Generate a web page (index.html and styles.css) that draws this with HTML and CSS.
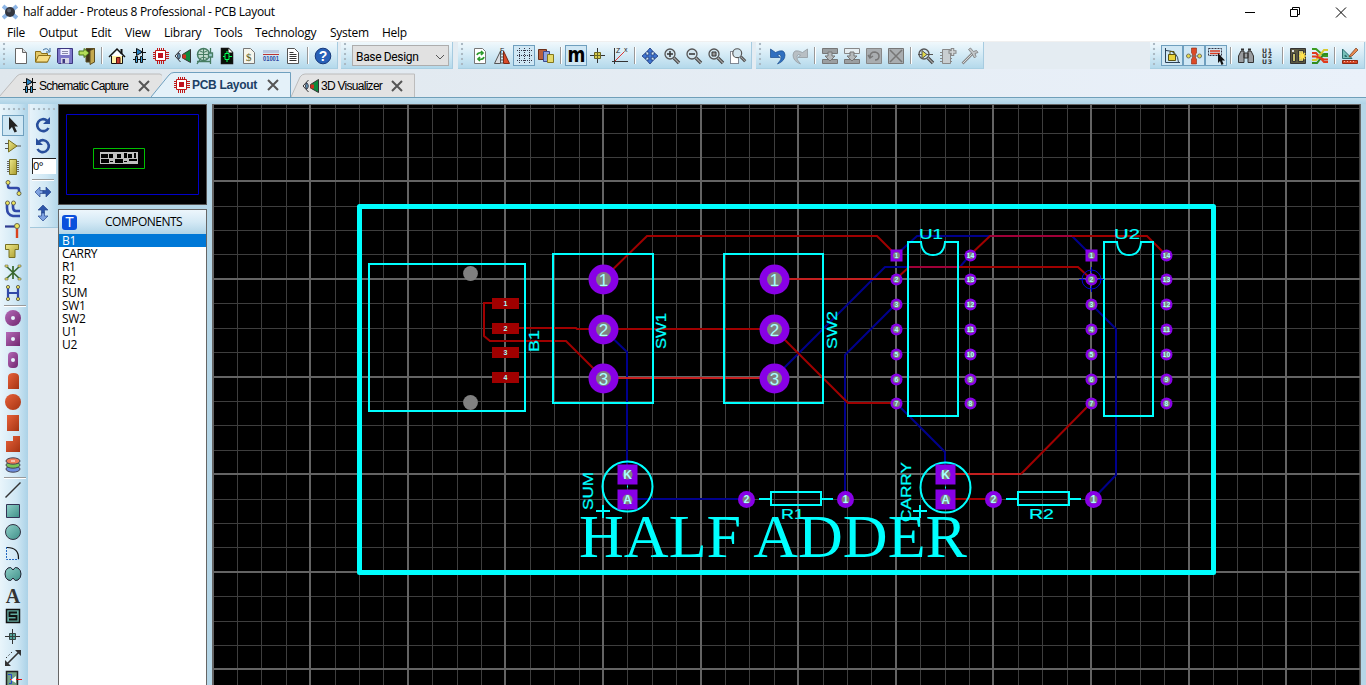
FILE: index.html
```html
<!DOCTYPE html>
<html lang="en">
<head>
<meta charset="utf-8">
<title>half adder - Proteus 8 Professional - PCB Layout</title>
<link rel="stylesheet" href="styles.css">
</head>
<body>
<svg class="defs" width="0" height="0">
  <defs>
    <linearGradient id="gold" x2="1" y2="1"><stop stop-color="#efe98a"/><stop offset="1" stop-color="#a89b2c"/></linearGradient>
    <linearGradient id="plum" x2="1" y2="1"><stop stop-color="#b56bb8"/><stop offset="1" stop-color="#71266f"/></linearGradient>
    <linearGradient id="rust" x2="1" y2="1"><stop stop-color="#e8623a"/><stop offset="1" stop-color="#a53413"/></linearGradient>
    <linearGradient id="teal" x2="1" y2="1"><stop stop-color="#8fd0c8"/><stop offset="1" stop-color="#3f8f88"/></linearGradient>
    <symbol id="chip" viewBox="0 0 18 18"><path d="M5.500 1v16M7.500 1v16M9.500 1v16M11.500 1v16M1 5.500h16M1 7.500h16M1 9.500h16M1 11.500h16" stroke="#c01818"/><path d="M3.500 3.500h10v10h-10z" fill="#fff" stroke="#c01818"/><path d="M6 6h5v5H6z" fill="#c01020"/></symbol>
    <symbol id="schem" viewBox="0 0 18 18"><path d="M3 5.500h13M3 12.500h13" stroke="#111"/><path d="M6.500 1.500v7l6-3.500z" fill="#2a86c8" stroke="#111"/><path d="M12.500 1v8" stroke="#111"/><path d="M5.500 9.500h2v6h-2zM10.500 9.500h2v6h-2z" fill="#3aa0dc" stroke="#111"/></symbol>
    <symbol id="viz" viewBox="0 0 18 18"><path d="M6.500 3 1 9l5.500 6" fill="none" stroke="#333"/><path d="M4.500 5.500Q8 9 4.500 12.500 2.500 9 4.500 5.500z" fill="#6aa4c4" stroke="#334"/><path d="M16.500 2.500v13L8.500 11V7.500z" fill="#0d8a3c" stroke="#333"/><path d="M8.500 7.500H12v4H8.500z" fill="#d03020"/></symbol>
    <symbol id="mag" viewBox="0 0 18 18"><path d="m11 11 5 5" stroke="#444" stroke-width="3.400"/><path d="m11 11 5 5" stroke="#a5a5a5" stroke-width="1.200"/><circle cx="7" cy="7" r="5" fill="#d3e5ee" stroke="#555" stroke-width="1.300"/></symbol>
    <symbol id="x" viewBox="0 0 12 12"><path d="m1 1 10 10M11 1 1 11" stroke="#555" stroke-width="2"/></symbol>
  </defs>
</svg>

<header class="titlebar">
  <svg class="app-icon" viewBox="0 0 16 16"><path d="m1 2 14 12M15 2 1 14" stroke="#8eb6e6" stroke-width="4"/><circle cx="8" cy="8" r="5" fill="#33363f"/><circle cx="7" cy="6.500" r="2" fill="#5f6572"/></svg>
  <span class="title">half adder - Proteus 8 Professional - PCB Layout</span>
  <svg class="controls" viewBox="0 0 102 20"><path d="M0 10.500h10M45.500 7.500h7v7h-7zM47.500 7V5.500h7v7H53M91 5.500l10 10M101 5.500l-10 10" fill="none" stroke="#000"/></svg>
</header>

<nav class="menubar"><span>File</span><span>Output</span><span>Edit</span><span>View</span><span>Library</span><span>Tools</span><span>Technology</span><span>System</span><span>Help</span></nav>

<div class="toolbars">
  <div class="bar bar-file">
    <i class="grip"></i>
    <b class="btn"><svg viewBox="0 0 18 18"><path d="M3.500 1.500h7l4 4v11h-11z" fill="#fff" stroke="#666"/><path d="M10.500 1.500v4h4" fill="#ddd" stroke="#666"/></svg></b>
    <b class="btn"><svg viewBox="0 0 18 18"><path d="M1.500 15V4.500h5l1 2h6V15z" fill="#e3c866" stroke="#8a6d17"/><path d="m1.500 15 3-6.500h12L13.500 15z" fill="#f7dd83" stroke="#8a6d17"/><path d="M9 3q4-3 6 1m1-3v4h-4" fill="none" stroke="#3d6d9c"/></svg></b>
    <b class="btn"><svg viewBox="0 0 18 18"><path d="M1.500 1.500h15v15h-14l-1-1z" fill="#7c76c8" stroke="#3b3680"/><path d="M4.500 2h9v6h-9z" fill="#eef"/><path d="M6 4.500h6M6 6.500h6" stroke="#88a"/><path d="M5 11h8v5.500H5z" fill="#d5d5e6"/><path d="M6.500 12H9v4H6.500z" fill="#3b3680"/></svg></b>
    <b class="btn"><svg viewBox="0 0 18 18"><path d="M8 1.500h8.500V15H8z" fill="#3e3418" stroke="#5b4d22"/><path d="M12 3.500l4.500-2V15L12 17.500z" fill="#c3a84e" stroke="#5b4d22"/><path d="M1 4h5V1.500L11 6l-5 4.500V8H1z" fill="#b4dc58" stroke="#47751a"/></svg></b>
    <i class="sep"></i>
    <b class="btn"><svg viewBox="0 0 18 18"><path d="M3.500 9v7.500h11V9" fill="#fff2a8" stroke="#111"/><path d="M13.500 7V2" stroke="#111" stroke-width="2"/><path d="M4 9 9 4l5 5z" fill="#fff"/><path d="M1 10 9 2l8 8" fill="none" stroke="#111" stroke-width="1.500"/><path d="M8.500 10.500H12v6H8.500z" fill="#c9382b" stroke="#511"/></svg></b>
    <b class="btn"><svg><use href="#schem"/></svg></b>
    <b class="btn"><svg><use href="#chip"/></svg></b>
    <b class="btn"><svg><use href="#viz"/></svg></b>
    <b class="btn"><svg viewBox="0 0 18 18"><circle cx="7.500" cy="7.500" r="6" fill="#c3dccf" stroke="#467c62" stroke-width="1.500"/><path d="M2 7.500h11M7.500 2v11M4 4q3.500 3 7 0M4 11.500q3.500-3 7 0" stroke="#467c62" fill="none"/><path d="M14.500 1v5M12.500 6h4v4h-4zM14.500 10v7M4 12.500 1 17M1 14.500h13" stroke="#467c62" stroke-width="1.300" fill="#9cc"/></svg></b>
    <b class="btn"><svg viewBox="0 0 18 18"><path d="M3.500 1.500h7l4 4v11h-11z" fill="#061006" stroke="#111" stroke-width="1.500"/><path d="M10.500 1.500v4h4z" fill="#fff"/><path d="M5 9.500h2v-3h4v6H7v-3M11 9.500h3M9 4v2M9 13v2" fill="none" stroke="#0f5"/></svg></b>
    <b class="btn"><svg viewBox="0 0 18 18"><path d="M3.500 1.500h7l4 4v11h-11z" fill="#f5f5ec" stroke="#777"/><text x="6" y="13.500" class="g-dollar">$</text></svg></b>
    <b class="btn"><svg viewBox="0 0 18 18"><path d="M1 3h16v3H1z" fill="#bac8e0"/><path d="M1 7.500h16" stroke="#b33"/><text x="1" y="14" class="g-bits" textLength="16" lengthAdjust="spacingAndGlyphs">01001</text></svg></b>
    <b class="btn"><svg viewBox="0 0 18 18"><path d="M3.500 1.500h7l4 4v11h-11z" fill="#fff" stroke="#555"/><path d="M5.500 5.500h4M5.500 7.500h7M5.500 9.500h7M5.500 11.500h7M5.500 13.500h7" stroke="#333"/></svg></b>
    <i class="sep"></i>
    <b class="btn"><svg viewBox="0 0 18 18"><circle cx="9" cy="9" r="7.800" fill="#2860b8" stroke="#16397c"/><text x="4.700" y="14" class="g-help">?</text></svg></b>
  </div>

  <div class="bar bar-combo">
    <i class="grip"></i>
    <div class="combo"><span>Base Design</span><svg viewBox="0 0 10 6"><path d="m1 1 4 4 4-4" fill="none" stroke="#555"/></svg></div>
  </div>

  <div class="bar bar-view">
    <i class="grip"></i>
    <b class="btn"><svg viewBox="0 0 18 18"><path d="M3.500 1.500h8l3 3v12h-11z" fill="#fff" stroke="#777"/><path d="M6 8q1-3 5-2M10 4l2 2-2 2M13 10q-1 3-5 2M9 10l-2 2 2 2" fill="none" stroke="#2c9a2c" stroke-width="1.700"/></svg></b>
    <b class="btn"><svg viewBox="0 0 18 18"><path d="M7.500 4v12.500h-6z" fill="#d9dde2" stroke="#555"/><path d="M10.500 4v12.500h6z" fill="#d84a28" stroke="#7a2713"/><path d="M9 6v11" stroke="#555" stroke-dasharray="2 1"/><text x="7" y="6" class="g-tiny">F</text></svg></b>
    <b class="btn on"><svg viewBox="0 0 18 18"><path d="M2 3.500h15M2 8.500h15M2 13.500h15M4.500 1v15M9.500 1v15M14.500 1v15" stroke="#334" stroke-dasharray="1 1"/></svg></b>
    <b class="btn"><svg viewBox="0 0 18 18"><path d="M1.500 2.500h8v10h-8z" fill="#b9603e" stroke="#6a2e18"/><path d="M6.500 4.500h6v10h-6z" fill="#8fa3e0" stroke="#3b4b90"/><path d="M10.500 7.500h6v8h-6z" fill="#e6da6b" stroke="#82771d"/></svg></b>
    <i class="sep"></i>
    <b class="btn on"><span class="g-m">m</span></b>
    <b class="btn"><svg viewBox="0 0 18 18"><path d="M8.500 1v15M1 8.500h15" stroke="#333"/><path d="M5.500 5.500h6v6h-6z" fill="#d8ce4e" stroke="#6b6522"/><path d="M8.500 6v6M6 8.500h6" stroke="#6b6522"/></svg></b>
    <b class="btn"><svg viewBox="0 0 18 18"><path d="M3.500 1v16M1 14.500h16" stroke="#333"/><path d="m4 14 9-9" stroke="#d33"/><text x="5" y="6" class="g-tiny">Z</text><text x="13" y="5" class="g-tiny">x</text></svg></b>
    <i class="sep"></i>
    <b class="btn"><svg viewBox="0 0 18 18"><path d="m9 1 3.500 4h-2.300v3H13V5.500L17 9l-4 3.500V10.200h-2.800V13h2.300L9 17l-3.500-4h2.300v-2.800H5v2.300L1 9l4-3.500V8h2.800V5H5.500z" fill="#3f75d0" stroke="#1a3576" stroke-width=".8"/></svg></b>
    <b class="btn"><svg viewBox="0 0 18 18"><use href="#mag"/><path d="M4 7h6M7 4v6" stroke="#333" stroke-width="1.500"/></svg></b>
    <b class="btn"><svg viewBox="0 0 18 18"><use href="#mag"/><path d="M4 7h6" stroke="#333" stroke-width="1.500"/></svg></b>
    <b class="btn"><svg viewBox="0 0 18 18"><use href="#mag"/><path d="M5 5h4v4H5z" fill="#999" stroke="#333"/></svg></b>
    <b class="btn"><svg viewBox="0 0 18 18"><path d="M1.500 4.500h8v12h-8z" fill="#fff" stroke="#223" stroke-dasharray="1 1"/><g transform="translate(2 0)"><use href="#mag" width="16" height="16"/></g></svg></b>
  </div>

  <div class="bar bar-edit">
    <i class="grip"></i>
    <b class="btn"><svg viewBox="0 0 18 18"><path d="M6.500 5.500Q15.500 1 16 8q0 6-7.500 9Q13 12.500 12 9q-1-2.500-3.500-1L11 10.500H1.500V2z" fill="#2f6fc0" stroke="#174a8c" stroke-width=".7"/></svg></b>
    <b class="btn"><svg viewBox="0 0 18 18"><path d="M11.500 5.500Q2.500 1 2 8q0 6 7.500 9Q5 12.500 6 9q1-2.500 3.500-1L7 10.500h9.500V2z" fill="#b8bfc4" stroke="#8d9499" stroke-width=".7"/></svg></b>
    <i class="sep"></i>
    <b class="btn"><svg viewBox="0 0 18 18"><path d="M1.500 1.500h15v5h-15zM1.500 12.500h15v4h-15z" fill="#9b9fa1" stroke="#777"/><path d="M7 5h4v4h3l-5 5-5-5h3z" fill="#b5b9bb" stroke="#777"/></svg></b>
    <b class="btn"><svg viewBox="0 0 18 18"><path d="M1.500 1.500h15v5h-15z" fill="#e5edf1" stroke="#888"/><path d="M1.500 12.500h15v4h-15z" fill="#9b9fa1" stroke="#777"/><path d="M7 5h4v4h3l-5 5-5-5h3z" fill="#b5b9bb" stroke="#777"/></svg></b>
    <b class="btn"><svg viewBox="0 0 18 18"><path d="M1.500 1.500h15v15h-15z" fill="#a9adb0" stroke="#888"/><path d="M5 10q0-5 5-5 4 1 4 4 0 4-4 4M3 8l2 3 3-2" fill="none" stroke="#777" stroke-width="1.500"/></svg></b>
    <b class="btn"><svg viewBox="0 0 18 18"><path d="M1.500 1.500h15v15h-15z" fill="#a9adb0" stroke="#777"/><path d="m3 3 12 12M15 3 3 15" stroke="#777" stroke-width="1.500"/></svg></b>
    <i class="sep"></i>
    <b class="btn"><svg viewBox="0 0 18 18"><use href="#mag"/><path d="M1 7.500h15" stroke="#555"/><path d="M5 3.500v8l5-4z" fill="#e0d84a" stroke="#555"/></svg></b>
    <b class="btn"><svg viewBox="0 0 18 18"><path d="M1 5.500h12M1 8.500h12M1 11.500h12M1 14.500h12" stroke="#888"/><path d="M3.500 2.500h8v14h-8z" fill="#c9ced1" stroke="#888"/><path d="M13.500 1v8M9.500 5h8" stroke="#888" stroke-width="3.500"/><path d="M13.500 2v6M10.500 5h6" stroke="#d5d9db" stroke-width="1.500"/></svg></b>
    <b class="btn"><svg viewBox="0 0 18 18"><path d="m1.500 16.500 10-10" stroke="#888" stroke-width="2.600"/><path d="m2 16 9-9" stroke="#d5d9db"/><path d="m7.500 2.500 2-1.500 3 3.500 3-1 1.500 2-3 1 1 3-1.500 1.500-3-5z" fill="#c3c8cb" stroke="#777" stroke-width=".8"/></svg></b>
  </div>

  <div class="bar bar-tools">
    <i class="grip"></i>
    <b class="btn on"><svg viewBox="0 0 18 18"><path d="M2.500 1v14.500H17M3 3.500q12 0 12.500 12" fill="none" stroke="#2c4258"/><path d="M5.500 7.500h7v6h-7z" fill="#e8d33c" stroke="#5d5413"/><path d="M7 7V4.500h4V7" fill="none" stroke="#5d5413"/></svg></b>
    <b class="btn on"><svg viewBox="0 0 18 18"><path d="M6.500 1h5v5l-1 1v4l1 1v5h-5v-5l1-1V7l-1-1z" fill="#dc4a26" stroke="#8a2a10" stroke-width=".6"/><path d="M1 9h16" stroke="#777"/><circle cx="3.500" cy="9" r="2" fill="#e8dc4a" stroke="#776"/><circle cx="14.500" cy="9" r="2" fill="#e8dc4a" stroke="#776"/></svg></b>
    <b class="btn on"><svg viewBox="0 0 18 18"><path d="M1.500 1.500h13v7h-13z" fill="none" stroke="#334" stroke-dasharray="2 1"/><path d="M3 4h10M3 6.500h10" stroke="#d8391e" stroke-width="1.500"/><path d="M11 6v10l2-2 1.500 4 2-1-1.500-3.500H18z" fill="#111"/></svg></b>
    <i class="sep"></i>
    <b class="btn"><svg viewBox="0 0 18 18"><path d="M1.500 15.500V9L4 4h3v11.500zM16.500 15.500V9L14 4h-3v11.500zM7 6h4v5H7z" fill="#9a9da0" stroke="#333"/><path d="M4 2.500h3M11 2.500h3" stroke="#333" stroke-width="2"/></svg></b>
    <b class="btn"><svg viewBox="0 0 18 18"><text class="g-u" textLength="10" x="3" y="5.500">U1</text><text class="g-u" textLength="10" x="3" y="11.300">U2</text><text class="g-u" textLength="10" x="3" y="17">U3</text></svg></b>
    <i class="sep"></i>
    <b class="btn"><svg viewBox="0 0 18 18"><path d="M1.500 1.500h15v15h-15z" fill="#5b5942" stroke="#333"/><path d="M3.500 6.500h3v8h-3zM9.500 3.500h5v11h-5z" fill="#c8c070" stroke="#333"/><path d="M3 3h2v2H3z" fill="#ddd"/><path d="M10 9h7M13.500 5v8M11 6l5 6M16 6l-5 6" stroke="#ffe34c" stroke-width="1.300"/></svg></b>
    <b class="btn"><svg viewBox="0 0 18 18"><g fill="none" stroke-width="2"><path d="M1 2h4l8 7h4" stroke="#3c9c20"/><path d="M1 6h4l8 9h4" stroke="#e03a1c"/><path d="M1 13h4l8-10h4" stroke="#d9c92c"/><path d="M1 16h5l7-9h4" stroke="#2f8b1e"/><path d="M1 9.500h4l8 3h4" stroke="#e03a1c"/></g></svg></b>
    <i class="sep"></i>
    <b class="btn"><svg viewBox="0 0 18 18"><path d="M1.500 2v9.500H11zM4 8v1.500h2z" fill="#77c1ba" stroke="#2d6d70"/><path d="m9 8 6-7 2 2-6 6-3 1z" fill="#e98b50" stroke="#75391c" stroke-width=".7"/><path d="M1.500 13.500h15v3h-15z" fill="#d94a28" stroke="#8e2912"/><path d="M3.500 14v1M6.500 14v1M9.500 14v1M12.500 14v1" stroke="#fff" stroke-width=".6"/></svg></b>
  </div>
</div>

<div class="tabs">
  <div class="tab tab-a">
    <svg class="tab-shape" viewBox="0 0 162 25" preserveAspectRatio="none"><path d="M-1 25 17 4q2-2 5-2h138l3 2v21" fill="#e3e3e3" stroke="#bcbcbc"/></svg>
    <svg class="tab-icon"><use href="#schem"/></svg><span>Schematic Capture</span><svg class="tab-close"><use href="#x"/></svg>
  </div>
  <div class="tab tab-c">
    <svg class="tab-shape" viewBox="0 0 124 25"><path d="m0 25 9-20q2-3 5-3h109.500v23" fill="#e3e3e3" stroke="#bcbcbc"/></svg>
    <svg class="tab-icon"><use href="#viz"/></svg><span>3D Visualizer</span><svg class="tab-close"><use href="#x"/></svg>
  </div>
  <div class="tab tab-b">
    <svg class="tab-shape" viewBox="0 0 140 26"><path d="M0 25 18 3q2-2.500 5-2.500h116.500V25" fill="#e4f1f9" stroke="#6fa0bf"/></svg>
    <svg class="tab-icon"><use href="#chip"/></svg><span>PCB Layout</span><svg class="tab-close"><use href="#x"/></svg>
  </div>
</div>
<div class="strip"></div>

<main class="work">
  <aside class="modes">
    <i class="grip-h"></i>
    <b class="tool on"><svg viewBox="0 0 18 18"><path d="M5 1v13l3-3 2.500 5.500 2.500-1-2.500-5H14z" fill="#222"/></svg></b>
    <b class="tool"><svg viewBox="0 0 18 18"><path d="M1 6.500h4M1 11.500h4M12 9h5" stroke="#555"/><path d="M4.500 3v12L13 9z" fill="url(#gold)" stroke="#777022"/></svg></b>
    <b class="tool"><svg viewBox="0 0 18 18"><path d="M3 3.500h12M3 5.500h12M3 7.500h12M3 9.500h12M3 11.500h12M3 13.500h12" stroke="#666"/><path d="M5.500 1.500h7v15h-7z" fill="url(#gold)" stroke="#777022"/></svg></b>
    <b class="tool"><svg viewBox="0 0 18 18"><path d="M4 3v4q0 2 2 2h7q2 0 2 2v3" fill="none" stroke="#3049a8" stroke-width="2.400"/><circle cx="4" cy="3.500" r="2" fill="#eee65a" stroke="#665"/><circle cx="15" cy="14.500" r="2" fill="#eee65a" stroke="#665"/></svg></b>
    <b class="tool"><svg viewBox="0 0 18 18"><path d="M3 3v5q0 7 6 8h7M9 3v4q0 4 3 4h4" fill="none" stroke="#3049a8" stroke-width="2.600"/><circle cx="3.500" cy="3" r="2" fill="#eee65a" stroke="#665"/><circle cx="9.500" cy="3" r="2" fill="#eee65a" stroke="#665"/></svg></b>
    <b class="tool"><svg viewBox="0 0 18 18"><path d="M1 5.500h12" stroke="#303c90" stroke-width="2.200"/><path d="M13 7v10" stroke="#d9411c" stroke-width="2.400"/><circle cx="13" cy="5" r="2.500" fill="#eee65a" stroke="#665"/></svg></b>
    <b class="tool"><svg viewBox="0 0 18 18"><path d="M1.500 2.500h13v5H11v8H5v-8H1.500z" fill="url(#gold)" stroke="#777022"/></svg></b>
    <b class="tool"><svg viewBox="0 0 18 18"><path d="m2 3 14 13M16 3 2 16M9 3v13" stroke="#37672c" stroke-width="1.700"/><path d="M1 2h3v2H1zM14 2h3v2h-3zM1 15h3v2H1zM14 15h3v2h-3z" fill="#eee65a" stroke="#665" stroke-width=".6"/></svg></b>
    <b class="tool"><svg viewBox="0 0 18 18"><path d="M4 3v6h10M14 3v12M4 15V9" fill="none" stroke="#3049a8" stroke-width="2.200"/><g fill="#eee65a" stroke="#665"><circle cx="4" cy="3" r="1.600"/><circle cx="14" cy="3" r="1.600"/><circle cx="4" cy="15" r="1.600"/><circle cx="14" cy="15" r="1.600"/></g></svg></b>
    <i class="sep-h"></i>
    <b class="tool"><svg viewBox="0 0 18 18"><circle cx="9" cy="9" r="8" fill="url(#plum)"/><circle cx="9" cy="9" r="2" fill="#e6f4fb"/></svg></b>
    <b class="tool"><svg viewBox="0 0 18 18"><path d="M2 2h14v14H2z" fill="url(#plum)"/><circle cx="9" cy="9" r="2" fill="#e6f4fb"/></svg></b>
    <b class="tool"><svg viewBox="0 0 18 18"><rect x="4" y="1" width="10" height="16" rx="4" fill="url(#plum)"/><circle cx="9" cy="9" r="2" fill="#e6f4fb"/></svg></b>
    <b class="tool"><svg viewBox="0 0 18 18"><path d="M4 17V5q0-4 5.500-4T15 5v12z" fill="url(#rust)"/></svg></b>
    <b class="tool"><svg viewBox="0 0 18 18"><circle cx="9" cy="9" r="8" fill="url(#rust)"/></svg></b>
    <b class="tool"><svg viewBox="0 0 18 18"><path d="M3 1h12v16H3z" fill="url(#rust)"/></svg></b>
    <b class="tool"><svg viewBox="0 0 18 18"><path d="M2 17V6h7V1h7v16z" fill="url(#rust)"/></svg></b>
    <b class="tool"><svg viewBox="0 0 18 18"><g stroke="#445"><ellipse cx="9" cy="13" rx="7" ry="3.200" fill="#6d8fe0"/><ellipse cx="9" cy="9" rx="7" ry="3.200" fill="#79c456"/><ellipse cx="9" cy="5" rx="7" ry="3.200" fill="#ee7c58"/></g><path d="M7 5h4" stroke="#fff"/></svg></b>
    <i class="sep-h"></i>
    <b class="tool"><svg viewBox="0 0 18 18"><path d="M1.500 16.500 16.500 1.500" stroke="#333" stroke-width="1.400"/></svg></b>
    <b class="tool"><svg viewBox="0 0 18 18"><path d="M2.500 2.500h13v13h-13z" fill="url(#teal)" stroke="#335"/></svg></b>
    <b class="tool"><svg viewBox="0 0 18 18"><circle cx="9" cy="9" r="7.500" fill="url(#teal)" stroke="#334"/></svg></b>
    <b class="tool"><svg viewBox="0 0 18 18"><path d="M2.500 3v12.500h12" fill="none" stroke="#2468c0" stroke-dasharray="2 1"/><path d="M3 3.500q12 0 11.500 11.500" fill="none" stroke="#111" stroke-width="1.200"/></svg></b>
    <b class="tool"><svg viewBox="0 0 18 18"><path d="M9 5q2-4 5-2 3 2 3 6t-3 6-5-2q-2 4-5 2-3-2-3-6t3-6 5 2z" fill="url(#teal)" stroke="#223"/></svg></b>
    <b class="tool"><span class="g-a">A</span></b>
    <b class="tool"><svg viewBox="0 0 18 18"><path d="M2.500 2.500h13v13h-13z" fill="#62aaa0" stroke="#111" stroke-width="1.500"/><path d="M13 5.500H5.500V9h7v3.500H5" fill="none" stroke="#111" stroke-width="1.800"/></svg></b>
    <b class="tool"><svg viewBox="0 0 18 18"><path d="M8.500 1v15M1 8.500h15" stroke="#333"/><path d="M5.500 5.500h6v6h-6z" fill="#54a89c" stroke="#344"/><path d="M8.500 6v6M6 8.500h6" stroke="#344"/></svg></b>
    <b class="tool"><svg viewBox="0 0 18 18"><path d="m2 16 14-14" stroke="#333" stroke-width="1.600"/><path d="M11 1h6v6zM1 11v6h6z" fill="#333"/><path d="m2 9 6-6" stroke="#333" stroke-dasharray="1.500 2"/></svg></b>
    <b class="tool"><svg viewBox="0 0 18 18"><path d="M2.500 1.500h11v16h-11z" fill="#72a083" stroke="#222" stroke-width="1.500"/><path d="M4 4.500h3.500v9H5" fill="none" stroke="#2345d0"/><path d="M6 9.500h12" stroke="#e01010"/><path d="m12 6-5 4 5 3z" fill="#fff"/></svg></b>
  </aside>

  <aside class="orient">
    <div class="orient-bar">
      <i class="grip-h"></i>
      <b class="tool"><svg viewBox="0 0 18 18"><path d="M14.500 12A6 6 0 1 1 13 4.500" fill="none" stroke="#284f9c" stroke-width="2.600"/><path d="M16 1v7H9z" fill="#284f9c"/></svg></b>
      <b class="tool"><svg viewBox="0 0 18 18"><path d="M3.500 12A6 6 0 1 0 5 4.500" fill="none" stroke="#284f9c" stroke-width="2.600"/><path d="M2 1v7h7z" fill="#284f9c"/></svg></b>
      <div class="angle">0°</div>
      <i class="sep-h"></i>
      <b class="tool"><svg viewBox="0 0 18 18"><path d="m1 9 5-5v3.500h3v3H6V14z" fill="#7ea2e0" stroke="#2a4b90" stroke-width=".7"/><path d="m17 9-5-5v3.500H9v3h3V14z" fill="#2d55a8" stroke="#2a4b90" stroke-width=".7"/></svg></b>
      <b class="tool"><svg viewBox="0 0 18 18"><path d="m9 1 5 5h-3.500v3h-3V6H4z" fill="#2d55a8" stroke="#2a4b90" stroke-width=".7"/><path d="m9 17 5-5h-3.500V9h-3v3H4z" fill="#7ea2e0" stroke="#2a4b90" stroke-width=".7"/></svg></b>
    </div>
  </aside>

  <section class="side">
    <svg class="overview" viewBox="59 105 147 99">
      <path d="M66.500 114.500h132v80h-132z" fill="none" stroke="#0000c8"/>
      <path d="M93.500 148.500h51v20h-51z" fill="none" stroke="#00c000"/>
      <path d="M100 152h38v12h-38z" fill="#c0c0c0"/>
      <path d="M101 154h7v4h-7zM109 154h4v4h-4zM117 154h4v4h-4zM124 153h3v5h-3zM128 154h4v4h-4zM134 153h2v5h-2zM101 159h8v4h-8zM115 159h8v4h-8zM129 159h8v2h-8zM110 161h3v1h-3zM124 161h3v1h-3z" fill="#000"/>
    </svg>
    <div class="parts">
      <div class="parts-head"><span class="t-badge">T</span><span class="parts-title">COMPONENTS</span></div>
      <ul><li class="sel">B1</li><li>CARRY</li><li>R1</li><li>R2</li><li>SUM</li><li>SW1</li><li>SW2</li><li>U1</li><li>U2</li></ul>
    </div>
  </section>

  <section class="canvas">
    <svg class="board" viewBox="213 105 1147 580">
      <g id="grid" shape-rendering="crispEdges"></g>
      <rect x="359.500" y="206.500" width="854" height="366" fill="none" stroke="#0ff" stroke-width="5" stroke-linejoin="round"/>
      <g class="blue">
        <path d="M603 329l24 23v122M627 499h119M896 304l-51 51v144M896 403l49 49v22M1091 304l25 25v146l-23 24"/>
        <path d="M896 255l21-19h155l19 19M774 378l111-111h75l10-12"/>
      </g>
      <g class="red">
        <path d="M603 279l44-43h230l19 19M970 255l20-19h157l19 19M896 279l13-12h169l13 12"/>
        <path d="M505 328h71l1 1h197l74 74h48M505 303h-21v33l6 5h76l37 37M1091 403l-70 71M945 499h48"/>
      </g>
      <path class="bright" d="M774 279h122M603 378h171M945 474h76"/>
      <path class="both" d="M990 236h82M909 267h51"/>
      <g class="silk">
        <path d="M369 264h156v147H369zM553 254h100v149H553zM724 254h99v149h-99z"/>
        <path d="M921 242h-13v174h50V242h-13q-1 13-12 13t-12-13zM1117 242h-13v174h49V242h-12q-1 13-12 13t-12-13z" />
        <circle cx="627.500" cy="486.500" r="25"/><circle cx="945.500" cy="487.500" r="25"/>
        <path d="M759 499h12M771 492h50v13h-50zM821 499h12M1006 499h12M1018 492h51v13h-51zM1069 499h12M596 511h14M603 505v13M913 511h14M920 505v13M627 486.500h1M945 487.500h1"/>
      </g>
      <g fill="#808080"><circle cx="470.500" cy="273.500" r="7.400"/><circle cx="470.500" cy="402.500" r="7.400"/></g>
      <g id="pads"></g>
      <g stroke="#0000d0" fill="none"><circle cx="1091.500" cy="279.500" r="9.500"/><path d="M1079 279.500h6M1098 279.500h6M1091.500 267v6M1091.500 286v6"/></g>
      <g class="ref">
        <text x="919" y="239" textLength="24" lengthAdjust="spacingAndGlyphs">U1</text>
        <text x="1114" y="239" textLength="26" lengthAdjust="spacingAndGlyphs">U2</text>
        <text x="781" y="518.500" textLength="23" lengthAdjust="spacingAndGlyphs">R1</text>
        <text x="1029" y="518.500" textLength="25" lengthAdjust="spacingAndGlyphs">R2</text>
        <text transform="translate(539 352) rotate(-90)" textLength="22" lengthAdjust="spacingAndGlyphs">B1</text>
        <text transform="translate(666 349) rotate(-90)" textLength="36" lengthAdjust="spacingAndGlyphs">SW1</text>
        <text transform="translate(837 349) rotate(-90)" textLength="38" lengthAdjust="spacingAndGlyphs">SW2</text>
        <text transform="translate(593 510) rotate(-90)" textLength="38" lengthAdjust="spacingAndGlyphs">SUM</text>
        <text transform="translate(911 522) rotate(-90)" textLength="60" lengthAdjust="spacingAndGlyphs">CARRY</text>
      </g>
      <text class="board-name" x="579" y="557" textLength="388" lengthAdjust="spacingAndGlyphs">HALF ADDER</text>
    </svg>
  </section>
</main>
<script src="board.js"></script>
</body>
</html>
```
FILE: styles.css
```css
* { box-sizing: border-box; }
body {
  margin: 0;
  width: 1366px;
  height: 685px;
  overflow: hidden;
  display: flex;
  flex-direction: column;
  background: #e3eaf1;
  color: #000;
  font: 12px "Open Sans", "Noto Sans", sans-serif;
}
svg { display: block; flex: none; }
.defs { position: absolute; }

.titlebar { flex: none; height: 23px; background: #fff; display: flex; align-items: center; padding-left: 2px; }
.app-icon { width: 16px; height: 16px; }
.title { margin-left: 5px; letter-spacing: -0.3px; white-space: nowrap; }
.controls { width: 102px; height: 20px; margin-left: auto; margin-right: 19px; }

.menubar {
  flex: none; height: 18px; background: #fff; padding-left: 7px;
  display: grid; grid-template-columns: 32px 52px 34px 39px 50px 41px 75px 52px 40px;
  line-height: 19px; letter-spacing: -0.25px;
}

.toolbars { flex: none; height: 28px; border-top: 1px solid #f0f0f0; display: flex; background: #e4ecf2; }
.bar {
  flex: none; display: flex; align-items: flex-start; height: 27px; padding: 3px 3px 0 0;
  background: linear-gradient(#f0f8fc, #d9edf7 40%, #b4d9eb);
  border-right: 1px solid #a6cbe0; border-bottom: 1px solid #a9cfe2;
}
.bar-combo { margin-left: 3px; }
.bar-view { margin-left: 5px; padding-right: 2px; }
.bar-edit { margin-left: 4px; padding-right: 2px; }
.bar-tools { margin-left: auto; margin-right: 1px; }
.grip { flex: none; width: 10px; height: 26px; margin-top: -3px; background: radial-gradient(circle at 4px 2px, #aab9c3 1px, transparent 1.6px) 0 0 / 10px 5px; }
.bar-tools .grip, .bar-view .grip, .bar-edit .grip { width: 11px; }
.btn { flex: none; width: 22px; height: 21px; padding-top: 2px; display: flex; align-items: flex-start; justify-content: center; }
.btn svg { width: 18px; height: 18px; }
.btn.on, .tool.on { background: #cfe7f4; border: 1px solid #6f9fbe; }
.btn.on { padding-top: 1px; }
.sep { flex: none; width: 8px; height: 17px; margin-top: 2px; background: linear-gradient(90deg, transparent 3px, #999 3px 4px, #fff 4px 5px, transparent 5px); }
.combo {
  width: 97px; height: 21px; background: #e1e1e1; border: 1px solid #adadad; margin-left: 1px;
  display: flex; align-items: center; justify-content: space-between; padding: 2px 3px 0;
  font: 12px Roboto, "Liberation Sans", sans-serif; letter-spacing: -0.35px;
}
.combo svg { width: 10px; height: 6px; }
.g-dollar { font: 11px "Liberation Serif", serif; fill: #5c5c20; }
.g-bits { font: bold 7px "Liberation Sans", sans-serif; fill: #2b45a0; }
.g-help { font: bold 14px "Liberation Sans", sans-serif; fill: #fff; }
.g-tiny { font: 7px "Liberation Sans", sans-serif; fill: #222; }
.g-u { font: bold 6.2px "DejaVu Sans", sans-serif; fill: #333; }
.g-m { font: bold 22px/14px "DejaVu Sans", sans-serif; transform: scaleX(.78); margin-top: 1px; }
.g-a { font: bold 20px/20px "Liberation Serif", serif; color: #333; }

.tabs { flex: none; height: 28px; position: relative; display: flex; align-items: flex-end; background: linear-gradient(90deg, #dfe7ed, #eaf1fa); font: 12px "Liberation Sans", sans-serif; }
.tab { position: relative; height: 25px; display: flex; align-items: center; white-space: nowrap; padding-top: 3px; }
.tab-shape { position: absolute; left: 0; top: 0; width: 100%; height: 100%; }
.tab span { position: relative; }
.tab-icon { position: relative; width: 18px; height: 18px; }
.tab-close { position: relative; width: 12px; height: 12px; }
.tab-a { width: 162px; padding-left: 20px; letter-spacing: -0.76px; }
.tab-a span { margin-left: 1px; width: 99px; }
.tab-b { position: absolute; left: 151px; bottom: -1px; width: 140px; height: 26px; padding: 0 0 0 22px; font-weight: bold; color: #1c4065; }
.tab-b span { margin-left: 1px; width: 75px; letter-spacing: -0.3px; }
.tab-c { margin-left: 129px; width: 124px; padding-left: 11px; letter-spacing: -0.72px; }
.tab-c span { margin-left: 1px; width: 70px; }
.strip { flex: none; height: 7px; border-top: 1px solid #6f9fb9; background: linear-gradient(#c3dfee, #aed3e6); }

.work { flex: 1; min-height: 0; display: flex; background: #b5d6e7; }
.modes { width: 28px; background: linear-gradient(90deg, #e9f5fb, #cfe7f4 60%, #abd2e7); overflow: hidden; padding-left: 2px; }
.tool { display: flex; width: 22px; height: 21px; padding-top: 1px; align-items: flex-start; justify-content: center; }
.tool.on { padding-top: 0; }
.tool svg { width: 18px; height: 18px; }
.grip-h { display: block; height: 11px; background: radial-gradient(circle at 2px 5px, #aab9c3 1px, transparent 1.6px) 0 0 / 5px 11px; }
.sep-h { display: block; width: 22px; height: 4px; background: linear-gradient(transparent 1px, #999 1px 2px, #fff 2px 3px, transparent 3px); margin-left: 2px; }
.orient { width: 30px; background: #e1e9ef; padding-left: 2px; }
.orient-bar { height: 124px; width: 28px; padding-left: 2px; background: linear-gradient(90deg, #e6f3fa, #cfe7f4 60%, #b4d7e9); border-bottom: 1px solid #a3c8dc; }
.angle { margin-top: 1px; height: 16px; width: 24px; background: #fff; border: 1px solid #222; border-width: 1px 0 0 1px; line-height: 14px; font-size: 11px; letter-spacing: -0.5px; }
.orient-bar .sep-h { margin: 4px 0 0; }

.side { width: 149px; display: flex; flex-direction: column; }
.overview { width: 149px; height: 101px; border: 1px solid #555; background: #000; }
.parts { margin-top: 4px; flex: 1; border: 1px solid #666; border-bottom: 0; background: #fff; }
.parts-head { height: 24px; display: flex; align-items: center; background: linear-gradient(#edf6fc, #d4e9f5 50%, #b0d4e7); }
.t-badge { margin-left: 3px; width: 15px; height: 15px; border-radius: 3px; background: #0b50dc; color: #fff; font: 14px/15px "Liberation Sans", sans-serif; text-align: center; }
.parts-title { margin-left: 28px; letter-spacing: -0.5px; margin-top: -2px; }
.parts ul { margin: 0; padding: 0; list-style: none; }
.parts li { height: 13px; line-height: 13px; padding-left: 3px; letter-spacing: -0.3px; }
.parts .sel { background: #0078d7; color: #fff; }

.canvas { margin-left: 5px; width: 1149px; border: 1px solid #666; border-bottom: 0; background: #000; overflow: hidden; }
.board { width: 1147px; height: 580px; }
.minor { stroke: #3e3e3e; }
.major { stroke: #646464; stroke-width: 2; }
.blue, .red, .bright, .both { fill: none; stroke-width: 2; }
.blue { stroke: #00008c; }
.red { stroke: #a00000; }
.bright { stroke: #c42020; }
.both { stroke: #a00038; }
.silk { fill: none; stroke: #0ff; stroke-width: 2; }
.pad { fill: #8800e6; }
.smd { fill: #a00000; }
.hole { fill: #808080; }
.pin { fill: #a8ffff; text-anchor: middle; font-family: "Liberation Sans", sans-serif; }
.ref { fill: #0ff; stroke: #0ff; stroke-width: .2; font: 14.500px "Liberation Sans", sans-serif; }
.board-name { fill: #0ff; font: 62px "Liberation Serif", serif; }
```
FILE: board.js
```js
const NS = 'http://www.w3.org/2000/svg';

function add(parent, tag, attrs, text) {
  const el = document.createElementNS(NS, tag);
  for (const key in attrs) el.setAttribute(key, attrs[key]);
  if (text !== undefined) el.textContent = text;
  parent.appendChild(el);
  return el;
}

// Four minor divisions to each major one.
const grid = document.getElementById('grid');
const step = 97.6 / 4;
function gridLines(kind) {
  for (let i = -12; i <= 40; i++) {
    const isMajor = i % 4 === 0;
    if (isMajor !== (kind === 'major')) continue;
    const half = isMajor ? 0 : 0.5;
    const x = Math.floor(408.2 + i * step) + half;
    const y = Math.floor(279.4 + i * step) + half;
    add(grid, 'path', { class: kind, d: `M${x} 105V685M213 ${y}H1360` });
  }
}
gridLines('minor');
gridLines('major');

const pads = document.getElementById('pads');
function label(x, y, size, text, weight) {
  add(pads, 'text', { class: 'pin', x, y: y + size * 0.36, 'font-size': size, 'font-weight': weight || 400 }, text);
}
function round(x, y, r, hole, size, text, weight) {
  add(pads, 'circle', { class: 'pad', cx: x, cy: y, r });
  add(pads, 'circle', { class: 'hole', cx: x, cy: y, r: hole });
  label(x, y, size, text, weight);
}
function square(x, y, side, hole, size, text) {
  add(pads, 'rect', { class: 'pad', x: x - side / 2, y: y - side / 2, width: side, height: side });
  add(pads, 'circle', { class: 'hole', cx: x, cy: y, r: hole });
  label(x, y, size, text, 700);
}

[303.5, 328.5, 352.5, 377.5].forEach((y, i) => {
  add(pads, 'rect', { class: 'smd', x: 492, y: y - 5.5, width: 27, height: 11 });
  label(505.5, y, 7, i + 1, 700);
});
for (const x of [603.5, 774.5]) {
  [279.5, 329.5, 378.5].forEach((y, i) => round(x, y, 15, 7.5, 17, i + 1));
}
const rows = [255.5, 279.5, 304.5, 329.5, 354.5, 379.5, 403.5];
for (const [left, right] of [[896.5, 970.5], [1091.5, 1166.5]]) {
  rows.forEach((y, i) => {
    if (i === 0) square(left, y, 12, 3.5, 7, 1);
    else round(left, y, 6, 3.5, 7, i + 1, 700);
    round(right, y, 6, 3.5, 7, 14 - i, 700);
  });
}
for (const x of [627.5, 945.5]) {
  square(x, 474.5, 20, 5, 12, 'K');
  square(x, 499.5, 20, 5, 12, 'A');
}
for (const [x, n] of [[746.5, 2], [845.5, 1], [993.5, 2], [1093.5, 1]]) round(x, 499.5, 8.5, 4, 10, n, 700);
```
